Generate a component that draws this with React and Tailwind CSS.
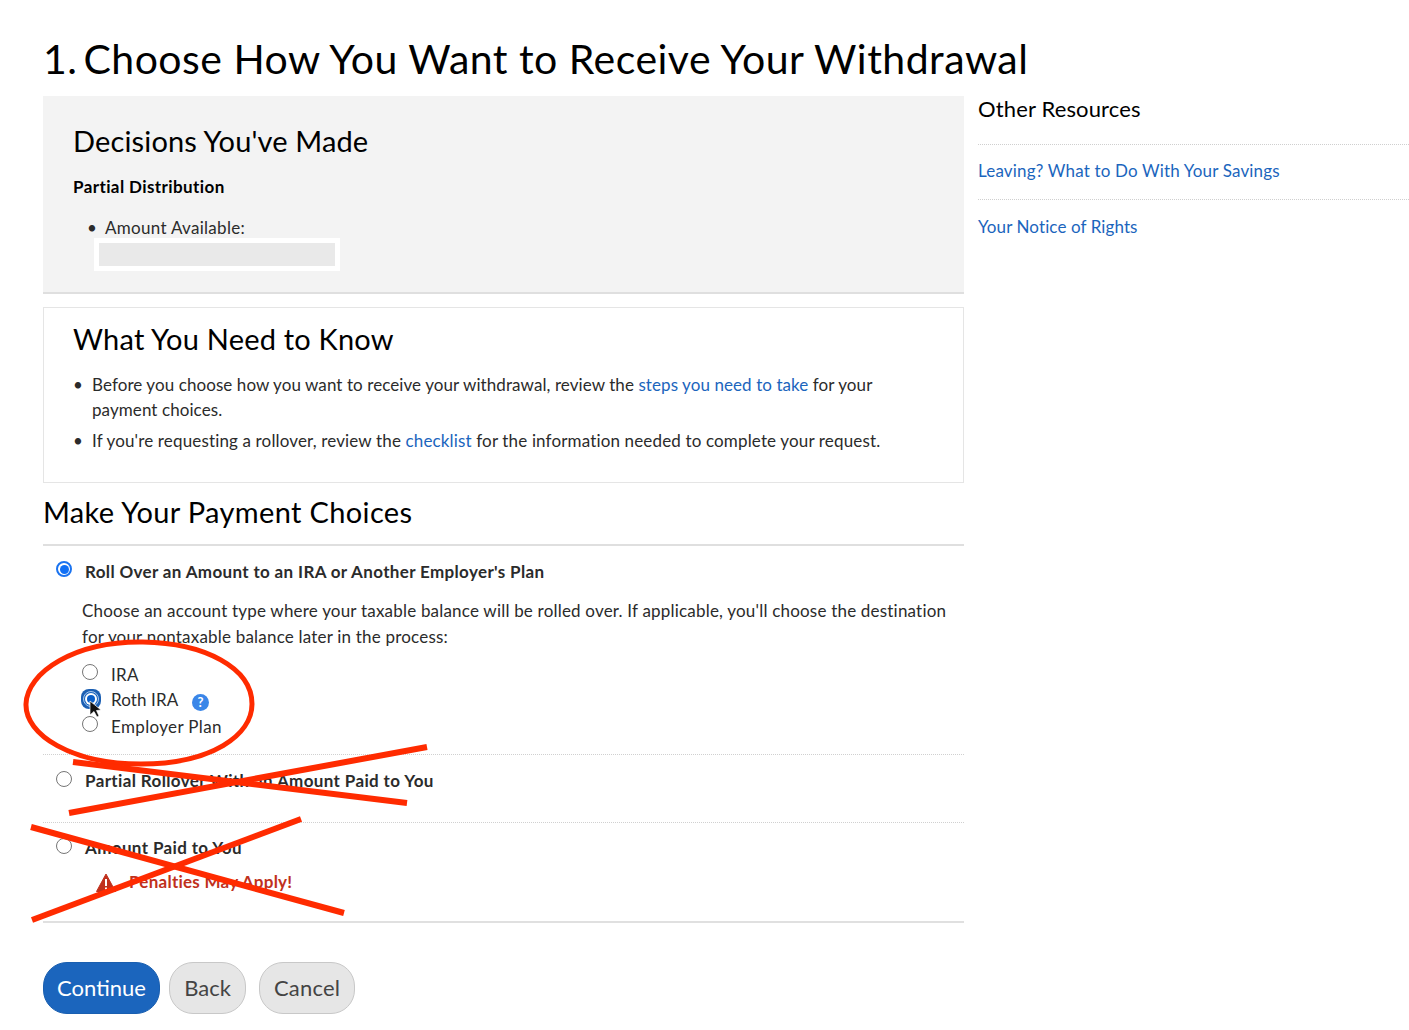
import React from "react";

function Radio({ checked, focused }) {
  if (focused) {
    return (
      <span className="flex h-[20px] w-[20px] shrink-0 items-center justify-center rounded-[8px] bg-[#1b5fb3]">
        <span className="flex h-[16px] w-[16px] items-center justify-center rounded-full border border-[#a9c8ee] bg-[#1b65bd]">
          <span className="flex h-[12px] w-[12px] items-center justify-center rounded-full bg-white">
            <span className="h-[8px] w-[8px] rounded-full bg-[#0b5fc8]" />
          </span>
        </span>
      </span>
    );
  }
  if (checked) {
    return (
      <span className="flex h-[16px] w-[16px] shrink-0 items-center justify-center rounded-full border-2 border-[#1a73f0] bg-white">
        <span className="h-[9px] w-[9px] rounded-full bg-[#0f6ff5]" />
      </span>
    );
  }
  return <span className="h-[16px] w-[16px] shrink-0 rounded-full border border-[#767676] bg-white" />;
}

function Annotations() {
  return (
    <svg className="pointer-events-none absolute left-0 top-0" width="1409" height="1030" fill="none" stroke="#ff2b00" strokeWidth="6">
      <path
        strokeWidth="5"
        d="M26 704C27 672 75 641 143 642C205 643 252 668 252 704C252 735 212 764 141 764C72 764 25 735 26 704Z"
      />
      <path d="M427 747L69 813" />
      <path d="M73 762L407 803" />
      <path d="M301 819L32 920" />
      <path d="M31 827L344 913" />
      <path d="M90 701L90 715L94 711.500L97 717L99 716L96.500 710.500L101 710Z" fill="#111" stroke="#fff" strokeWidth="0.7" />
    </svg>
  );
}

export default function App() {
  return (
    <div className="relative h-[1030px] w-[1409px] overflow-hidden bg-white pl-[43px] font-['Lato','Open_Sans',sans-serif] text-[#2b2b2b]">
      <h1 className="pt-[34px] text-[41px] leading-[50px] tracking-[0.48px] text-black">
        <span className="[word-spacing:-5px]">1. </span>Choose How You Want to Receive Your Withdrawal
      </h1>
      <div className="mt-[12px] flex">
        <main className="w-[921px]">
          <section className="h-[198px] border-b-2 border-[#dfdfdf] bg-[#f3f3f3] pl-[30px] pt-[27px]">
            <h2 className="text-[29px] leading-[36px] tracking-[0.15px] text-black">Decisions You've Made</h2>
            <p className="mt-[18px] text-[17px] font-bold leading-[20px] tracking-[0.4px] text-black">Partial Distribution</p>
            <div className="mt-[20px] flex h-[21px] items-start pl-[14px] text-[17px] leading-[22px] tracking-[0.3px]">
              <span className="w-[18px]">•</span>
              <span>Amount Available:</span>
            </div>
            <div className="ml-[21px] h-[33px] w-[246px] border-[5px] border-white bg-[#e9e9e9]" />
          </section>
          <section className="mt-[13px] h-[176px] border border-[#e5e5e5] pl-[29px] pt-[13px]">
            <h2 className="text-[29px] leading-[36px] tracking-[0.2px] text-black">What You Need to Know</h2>
            <ul className="mt-[15px] text-[17px]">
              <li className="flex leading-[25px] tracking-[0.08px]">
                <span className="w-[19px] shrink-0">•</span>
                <span className="w-[830px]">
                  Before you choose how you want to receive your withdrawal, review the{" "}
                  <a className="text-[#1b65bd]">steps you need to take</a> for your payment choices.
                </span>
              </li>
              <li className="mt-[6px] flex leading-[25px] tracking-[0.15px]">
                <span className="w-[19px] shrink-0">•</span>
                <span>
                  If you're requesting a rollover, review the <a className="text-[#1b65bd]">checklist</a> for the
                  information needed to complete your request.
                </span>
              </li>
            </ul>
          </section>
          <h2 className="mt-[11px] text-[29px] leading-[36px] tracking-[0.35px] text-black">Make Your Payment Choices</h2>

          <div className="mt-[14px] h-[211px] border-t-2 border-b border-t-[#dfdfdf] border-b-[#d0d0d0] [border-bottom-style:dotted]">
            <label className="flex items-start pl-[13px] pt-[15px]">
              <Radio checked />
              <span className="ml-[13px] text-[17px] font-bold leading-[22px] tracking-[0.35px]">Roll Over an Amount to an IRA or Another Employer's Plan</span>
            </label>
            <p className="ml-[39px] mt-[15px] w-[880px] text-[17px] leading-[26px] tracking-[0.2px]">
              Choose an account type where your taxable balance will be rolled over. If applicable, you'll choose the
              destination for your nontaxable balance later in the process:
            </p>
            <div className="ml-[37px] mt-[12px] text-[17px] tracking-[0.35px]">
              <div className="flex h-[27px] items-start pl-[2px] pt-[2px]">
                <Radio />
                <span className="ml-[13px] leading-[22px]">IRA</span>
              </div>
              <div className="ml-[1px] flex h-[26px] items-start">
                <Radio focused />
                <span className="ml-[10px] leading-[22px] tracking-[0.1px]">Roth IRA</span>
                <span className="ml-[14px] mt-[5px] flex h-[17px] w-[17px] items-center justify-center rounded-full bg-[#3a86e8] text-[13px] font-bold text-white">?</span>
              </div>
              <div className="flex h-[27px] items-start pl-[2px] pt-[1px]">
                <Radio />
                <span className="ml-[13px] leading-[22px]">Employer Plan</span>
              </div>
            </div>
          </div>

          <label className="flex h-[68px] items-start border-b border-dotted border-[#d0d0d0] pl-[13px] pt-[16px]">
            <Radio />
            <span className="-mt-[1px] ml-[13px] text-[17px] font-bold leading-[22px] tracking-[0.37px]">Partial Rollover With an Amount Paid to You</span>
          </label>

          <div className="h-[100px] border-b-2 border-[#e0e0e0] pl-[13px] pt-[15px]">
            <label className="flex items-start">
              <Radio />
              <span className="-mt-[1px] ml-[13px] text-[17px] font-bold leading-[22px] tracking-[0.37px]">Amount Paid to You</span>
            </label>
            <div className="ml-[40px] mt-[12px] flex items-center text-[17px] font-bold tracking-[0.25px] text-[#c0301c]">
              <svg width="20" height="19" viewBox="0 0 20 19">
                <path d="M10 1L19.500 18.500H0.500Z" fill="#c0301c" stroke="#c0301c" strokeLinejoin="round" />
                <path d="M9 6h2v7H9zM9 14.500h2v2H9z" fill="#fff" />
              </svg>
              <span className="ml-[13px] leading-[22px]">Penalties May Apply!</span>
            </div>
          </div>

          <div className="mt-[39px] flex text-[22px] leading-[30px]">
            <button className="h-[52px] w-[117px] rounded-[24px] border border-[#1a5fb0] bg-[#1b65bd] text-white">Continue</button>
            <button className="ml-[9px] h-[52px] w-[77px] rounded-[24px] border border-[#c8c8c8] bg-[#e6e6e6] text-[#444]">Back</button>
            <button className="ml-[13px] h-[52px] w-[96px] rounded-[24px] border border-[#c8c8c8] bg-[#e6e6e6] tracking-[0.2px] text-[#444]">Cancel</button>
          </div>
        </main>

        <aside className="ml-[14px] w-[431px]">
          <h3 className="h-[48px] text-[22px] leading-[26px] tracking-[0.15px] text-black">Other Resources</h3>
          <div className="h-[55px] border-t border-dotted border-[#cfcfcf] pt-[14px] text-[17px] leading-[24px] tracking-[0.17px] text-[#1b65bd]">
            <a>Leaving? What to Do With Your Savings</a>
          </div>
          <div className="border-t border-dotted border-[#cfcfcf] pt-[15px] text-[17px] leading-[24px] tracking-[0.1px] text-[#1b65bd]">
            <a>Your Notice of Rights</a>
          </div>
        </aside>
      </div>
      <Annotations />
    </div>
  );
}
